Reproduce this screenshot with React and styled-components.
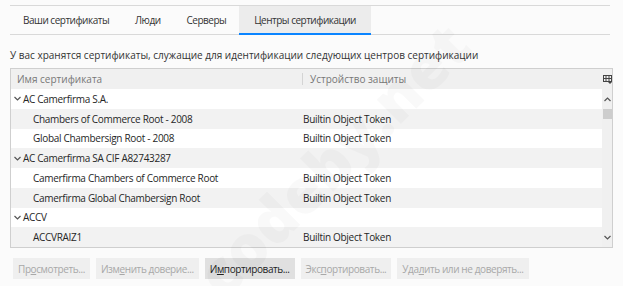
import React from 'react';
import styled, { createGlobalStyle } from 'styled-components';

const Global = createGlobalStyle`
  html, body {
    margin: 0;
    padding: 0;
    background: #fbfbfb;
  }
  body {
    font-family: "Open Sans", "Noto Sans", sans-serif;
    font-size: 10px;
    color: #2b2b2b;
  }
`;

const Page = styled.div`
  position: relative;
  width: 623px;
  height: 286px;
  padding: 5px 10px 0 10px;
  box-sizing: border-box;
  overflow: hidden;
`;

const Tabs = styled.div`
  display: flex;
  width: 600px;
  height: 28px;
  border-top: 1px solid #d9d9d9;
  border-bottom: 1px solid #d9d9d9;
`;

const Tab = styled.div`
  display: flex;
  align-items: center;
  padding: 0 ${p => p.$px || 13}px;
  background: ${p => (p.$active ? '#ececec' : 'transparent')};
  border-bottom: 2px solid ${p => (p.$active ? '#0a84ff' : 'transparent')};
  margin-bottom: -1px;
  color: #333;
  letter-spacing: -0.5px;
`;

const Intro = styled.div`
  margin: 13px 0 6px 0;
  color: #333;
  white-space: nowrap;
`;

const Table = styled.div`
  position: relative;
  width: 603px;
  height: 180px;
  border: 1px solid #cfcfcf;
  background: #fff;
  box-sizing: border-box;
  display: grid;
  grid-template-columns: 1fr 10px;
  grid-template-rows: 20px 1fr;
`;

const Head = styled.div`
  display: grid;
  grid-template-columns: 291px 1fr;
  background: #f0f0f0;
  color: #777;
  align-items: center;
`;

const HeadCell = styled.div`
  padding-left: ${p => p.$pl}px;
  border-left: ${p => (p.$sep ? '1px solid #d4d4d4' : 'none')};
  height: 12px;
  line-height: 12px;
`;

const Corner = styled.div`
  background: #f0f0f0;
  display: flex;
  align-items: center;
  justify-content: center;
`;

const Body = styled.div`
  display: flex;
  flex-direction: column;
  overflow: hidden;
`;

const Row = styled.div`
  display: grid;
  grid-template-columns: 291px 1fr;
  height: 19.75px;
  flex: none;
  align-items: center;
  background: ${p => (p.$odd ? '#f2f2f2' : '#fff')};
  color: #262626;
  letter-spacing: -0.3px;
`;

const Name = styled.div`
  display: flex;
  align-items: center;
  padding-left: ${p => (p.$group ? 3 : 22)}px;
  gap: 2px;
  white-space: nowrap;
`;

const Device = styled.div`
  padding-left: 1px;
`;

const Scroll = styled.div`
  display: flex;
  flex-direction: column;
  align-items: center;
  background: #f0f0f0;
`;

const Arrow = styled.div`
  height: 20px;
  display: flex;
  align-items: center;
  justify-content: center;
`;

const Thumb = styled.div`
  width: 9px;
  height: 10px;
  background: #cdcdcd;
`;

const Spacer = styled.div`
  flex: 1;
`;

const Buttons = styled.div`
  display: flex;
  gap: 6px;
  margin-top: 10px;
  padding-left: 3px;
`;

const Button = styled.div`
  height: 21px;
  display: flex;
  align-items: center;
  padding: 0 5px;
  background: ${p => (p.$enabled ? '#e0e0e0' : '#efefef')};
  color: ${p => (p.$enabled ? '#222' : '#a8a8a8')};
  white-space: nowrap;
  letter-spacing: -0.4px;
`;

const Watermark = styled.div`
  position: absolute;
  left: 137px;
  top: 124px;
  width: 390px;
  height: 70px;
  text-align: center;
  font-family: "Open Sans", sans-serif;
  font-weight: 800;
  font-size: 62px;
  line-height: 70px;
  color: rgba(0, 0, 0, 0.022);
  transform: rotate(-45deg);
  transform-origin: center center;
  pointer-events: none;
  white-space: nowrap;
`;

const Chevron = ({ up }) => (
  <svg width="7" height="5" viewBox="0 0 7 5">
    <path
      d={up ? 'M0.5 4 L3.5 1 L6.5 4' : 'M0.5 1 L3.5 4 L6.5 1'}
      fill="none"
      stroke="#555"
      strokeWidth="1.2"
    />
  </svg>
);

const PickerIcon = () => (
  <svg width="9" height="9" viewBox="0 0 9 9">
    <rect x="0.5" y="0.5" width="8" height="6" fill="none" stroke="#444" />
    <path d="M0.5 3.5 H8.5 M3 0.5 V6.5 M6 0.5 V6.5" stroke="#444" />
    <path d="M5 7 L7 9 L9 7" fill="#444" />
  </svg>
);

const rows = [
  { group: true, name: 'AC Camerfirma S.A.' },
  { name: 'Chambers of Commerce Root - 2008', dev: 'Builtin Object Token' },
  { name: 'Global Chambersign Root - 2008', dev: 'Builtin Object Token' },
  { group: true, name: 'AC Camerfirma SA CIF A82743287' },
  { name: 'Camerfirma Chambers of Commerce Root', dev: 'Builtin Object Token' },
  { name: 'Camerfirma Global Chambersign Root', dev: 'Builtin Object Token' },
  { group: true, name: 'ACCV' },
  { name: 'ACCVRAIZ1', dev: 'Builtin Object Token' },
];

export default function App() {
  return (
    <Page>
      <Global />
      <Tabs>
        <Tab>Ваши сертификаты</Tab>
        <Tab>Люди</Tab>
        <Tab>Серверы</Tab>
        <Tab $active $px={15}>Центры сертификации</Tab>
      </Tabs>
      <Intro>
        У вас хранятся сертификаты, служащие для идентификации следующих центров сертификации
      </Intro>
      <Table>
        <Head>
          <HeadCell $pl={6}>Имя сертификата</HeadCell>
          <HeadCell $pl={7} $sep>Устройство защиты</HeadCell>
        </Head>
        <Corner>
          <PickerIcon />
        </Corner>
        <Body>
          {rows.map((r, i) => (
            <Row key={i} $odd={i % 2 === 1}>
              <Name $group={r.group}>
                {r.group && <Chevron />}
                {r.name}
              </Name>
              <Device>{r.dev}</Device>
            </Row>
          ))}
        </Body>
        <Scroll>
          <Arrow>
            <Chevron up />
          </Arrow>
          <Thumb />
          <Spacer />
          <Arrow>
            <Chevron />
          </Arrow>
        </Scroll>
      </Table>
      <Buttons>
        <Button>Пр<u>о</u>смотреть...</Button>
        <Button>Изм<u>е</u>нить доверие...</Button>
        <Button $enabled>И<u>м</u>портировать...</Button>
        <Button>Экс<u>п</u>ортировать...</Button>
        <Button>Уда<u>л</u>ить или не доверять...</Button>
      </Buttons>
      <Watermark>codeby.net</Watermark>
    </Page>
  );
}
